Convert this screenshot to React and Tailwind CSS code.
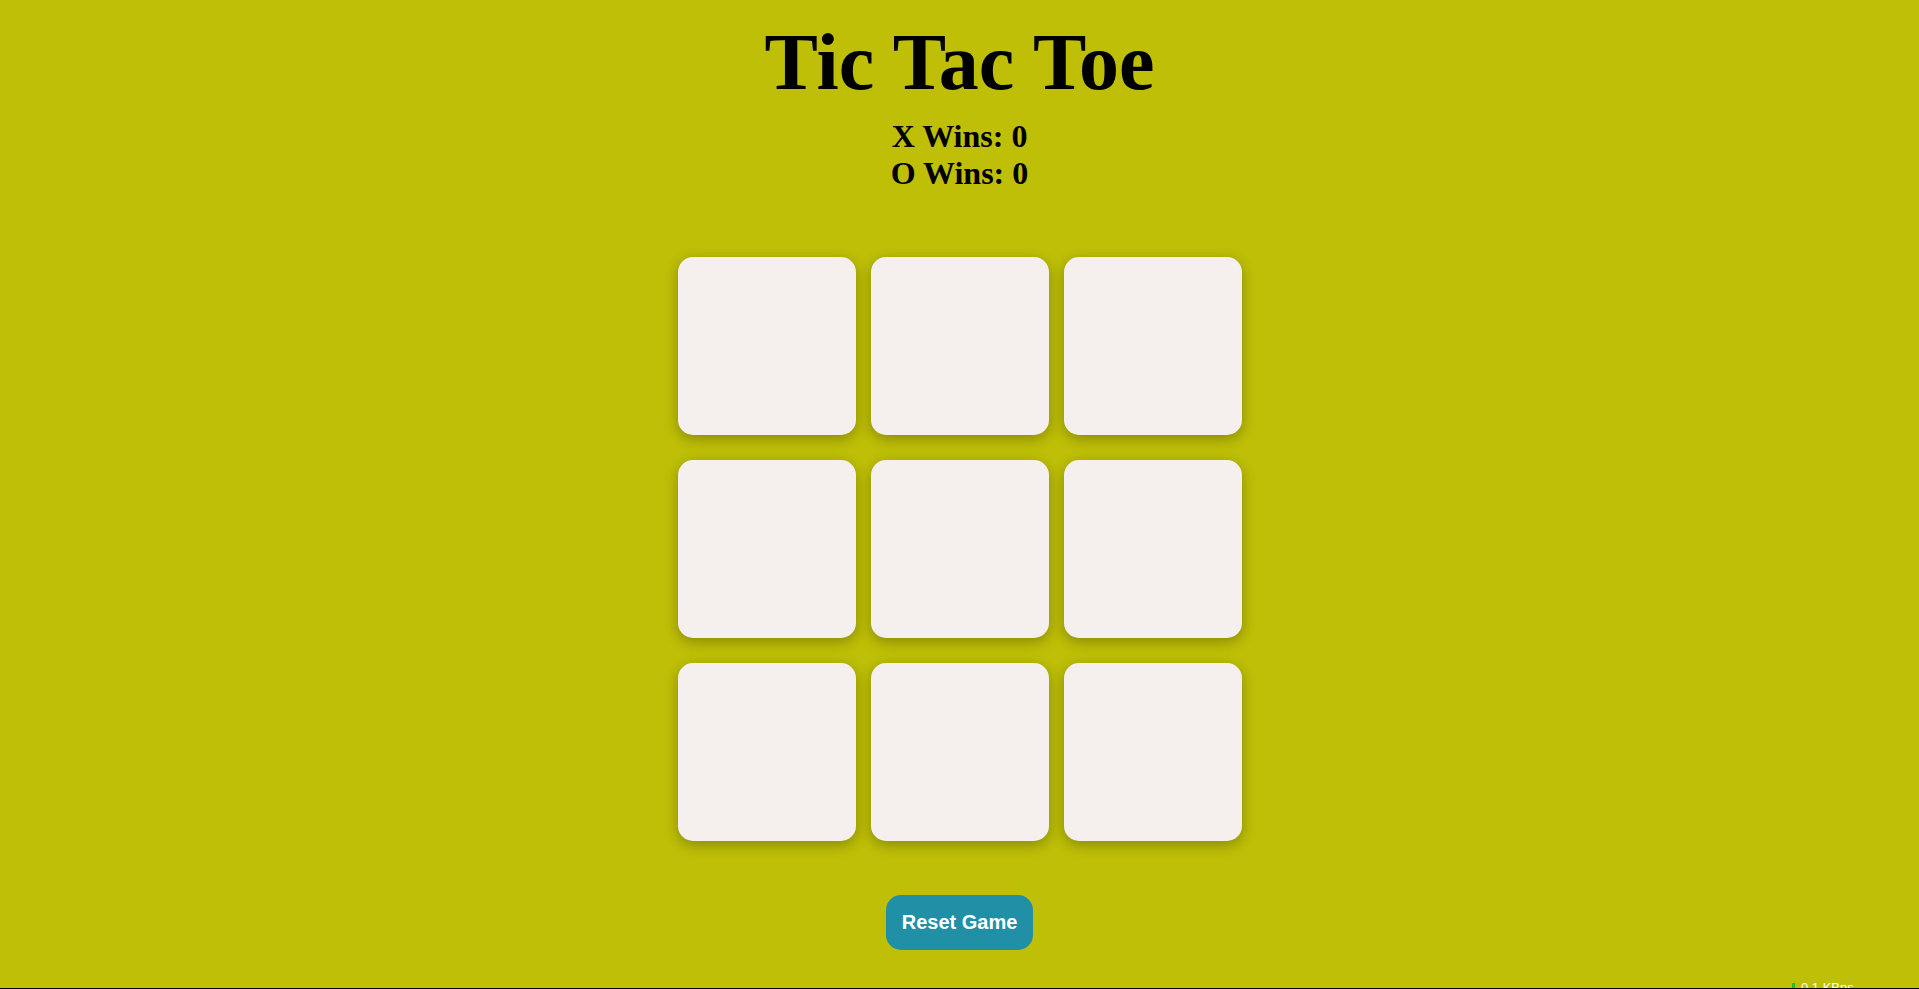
import { useState } from "react";

const Cell = ({ value, onClick }) => (
  <button
    onClick={onClick}
    className="w-[178px] h-[178px] rounded-[15px] bg-[#f5f0ee] shadow-[0_4px_14px_rgba(0,0,0,0.28)] flex items-center justify-center text-[96px] font-bold text-black"
  >
    {value}
  </button>
);

const App = () => {
  const [board, setBoard] = useState(Array(9).fill(null));
  const [xNext, setXNext] = useState(true);
  const [wins] = useState({ X: 0, O: 0 });

  const play = (i) => {
    if (board[i]) return;
    const next = board.slice();
    next[i] = xNext ? "X" : "O";
    setBoard(next);
    setXNext(!xNext);
  };

  const reset = () => {
    setBoard(Array(9).fill(null));
    setXNext(true);
  };

  return (
    <div className="relative h-[989px] overflow-hidden bg-[#bebf06] flex flex-col items-center font-['Liberation_Serif',serif] text-black border-b border-black">
      <h1 className="mt-[22px] text-[80px] leading-[80px] font-bold">Tic Tac Toe</h1>
      <div className="mt-[16px] text-[32px] leading-[37px] font-bold text-center">
        <div>X Wins: {wins.X}</div>
        <div>O Wins: {wins.O}</div>
      </div>

      <div className="mt-[65px] grid grid-cols-3 gap-x-[15px] gap-y-[25px]">
        {board.map((v, i) => (
          <Cell key={i} value={v} onClick={() => play(i)} />
        ))}
      </div>

      <button
        onClick={reset}
        className="mt-[54px] px-4 py-4 rounded-[15px] bg-[#2190a6] text-white text-[20px] leading-[23px] font-bold font-['Liberation_Sans',Arial,sans-serif]"
      >
        Reset Game
      </button>

      {/* tray speed meter peeking in at the bottom edge */}
      <div className="absolute left-[1792px] bottom-0 h-[6px] overflow-hidden flex items-start gap-[6px] font-['Liberation_Sans',sans-serif] text-[13px] leading-[13px] text-white">
        <span className="w-[3px] h-[8px] bg-[#22c022] mt-[1px]"></span>
        <span className="-mt-[1px]">0.1 KBps</span>
      </div>
    </div>
  );
};

export default App;
